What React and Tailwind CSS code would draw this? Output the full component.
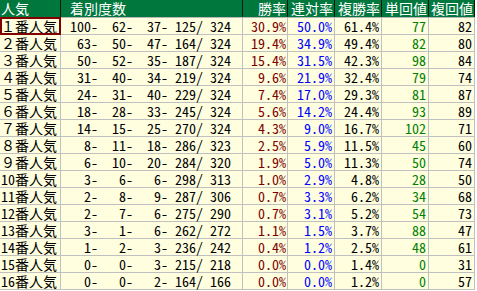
import React from "react";

const rows = [
  ["１", 100, 62, 37, 125, 324, "30.9%", "50.0%", "61.4%", "77", "82"],
  ["２", 63, 50, 47, 164, 324, "19.4%", "34.9%", "49.4%", "82", "80"],
  ["３", 50, 52, 35, 187, 324, "15.4%", "31.5%", "42.3%", "98", "84"],
  ["４", 31, 40, 34, 219, 324, "9.6%", "21.9%", "32.4%", "79", "74"],
  ["５", 24, 31, 40, 229, 324, "7.4%", "17.0%", "29.3%", "81", "87"],
  ["６", 18, 28, 33, 245, 324, "5.6%", "14.2%", "24.4%", "93", "89"],
  ["７", 14, 15, 25, 270, 324, "4.3%", "9.0%", "16.7%", "102", "71"],
  ["８", 8, 11, 18, 286, 323, "2.5%", "5.9%", "11.5%", "45", "60"],
  ["９", 6, 10, 20, 284, 320, "1.9%", "5.0%", "11.3%", "50", "74"],
  ["10", 3, 6, 6, 298, 313, "1.0%", "2.9%", "4.8%", "28", "50"],
  ["11", 2, 8, 9, 287, 306, "0.7%", "3.3%", "6.2%", "34", "68"],
  ["12", 2, 7, 6, 275, 290, "0.7%", "3.1%", "5.2%", "54", "73"],
  ["13", 3, 1, 6, 262, 272, "1.1%", "1.5%", "3.7%", "88", "47"],
  ["14", 1, 2, 3, 236, 242, "0.4%", "1.2%", "2.5%", "48", "61"],
  ["15", 0, 0, 3, 215, 218, "0.0%", "0.0%", "1.4%", "0", "31"],
  ["16", 0, 0, 2, 164, 166, "0.0%", "0.0%", "1.2%", "0", "57"],
];

const pad = (n, w) => String(n).padStart(w, " ");

const cols = "grid grid-cols-[61px_182px_45px_47px_47px_47px_46px]";
const num = "[font-feature-settings:'hwid']";

export default function App() {
  return (
    <div className="w-[477px] h-[291px] bg-white overflow-hidden">
      <div className="w-[475px] font-['Noto_Sans_CJK_JP',sans-serif] text-[14px] leading-[16px]">
        <div className={`${cols} h-[18px] bg-[#00773c] text-white border-b border-[#b8b8b8]`}>
          <div className="border-r border-[#0a1a10] pl-[1px] leading-[17px]">人気</div>
          <div className="border-r border-[#0a1a10] pl-[9px] leading-[17px]">着別度数</div>
          <div className="border-r border-[#0a1a10] text-right pr-[1px] leading-[17px]">勝率</div>
          <div className="border-r border-[#0a1a10] text-right pr-[1px] leading-[17px]">連対率</div>
          <div className="border-r border-[#0a1a10] text-right pr-[1px] leading-[17px]">複勝率</div>
          <div className="border-r border-[#0a1a10] text-right pr-[1px] leading-[17px]">単回値</div>
          <div className="border-r border-[#0a1a10] text-right pr-[1px] leading-[17px]">複回値</div>
        </div>
        {rows.map((r, i) => {
          const rec =
            pad(r[1], 3) + "-" + pad(r[2], 4) + "-" + pad(r[3], 4) + "-" + pad(r[4], 4) + "/" + pad(r[5], 4);
          return (
            <div key={i} className={`${cols} h-[17px] bg-[#ffffe0] text-black`}>
              <div className="relative border-r border-b border-[#c0c0c0] pl-[1px] whitespace-nowrap">
                <span className={i >= 9 ? num : ""}>{r[0]}</span>番人気
                {i === 0 && (
                  <div className="absolute left-0 top-[-1px] right-[-1px] bottom-[-1px] border-2 border-[#800000]"></div>
                )}
              </div>
              <div className={`${num} border-r border-b border-[#c0c0c0] pl-[9px] whitespace-pre`}>{rec}</div>
              <div className={`${num} border-r border-b border-[#c0c0c0] text-right pr-[1px] text-[#800000]`}>{r[6]}</div>
              <div className={`${num} border-r border-b border-[#c0c0c0] text-right pr-[2px] text-[#0000ff]`}>{r[7]}</div>
              <div className={`${num} border-r border-b border-[#c0c0c0] text-right pr-[2px]`}>{r[8]}</div>
              <div className={`${num} border-r border-b border-[#c0c0c0] text-right pr-[2px] text-[#008000]`}>{r[9]}</div>
              <div className={`${num} border-r border-b border-[#c0c0c0] text-right pr-[2px]`}>{r[10]}</div>
            </div>
          );
        })}
      </div>
    </div>
  );
}
